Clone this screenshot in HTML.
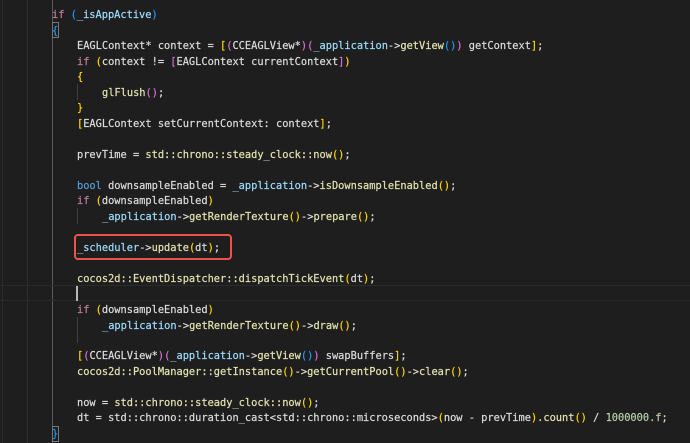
<!DOCTYPE html>
<html>
<head>
<meta charset="utf-8">
<style>
html,body{margin:0;padding:0;background:#1e1e1e}
#w{position:relative;width:690px;height:443px;overflow:hidden;background:#1e1e1e}
#t{position:absolute;left:0;top:1.6px;width:690px;height:443px}
.l{position:absolute;left:0;white-space:pre;font:10.345px/15.52px "DejaVu Sans Mono","Liberation Mono",monospace;color:#dcdcdc;filter:blur(.25px);font-variant-ligatures:none;-webkit-text-stroke:.2px currentColor}
.g{position:absolute;width:1px;background:#404040}
.h{position:absolute;left:0;width:690px;height:1px;background:#2a2a2a}
.k{color:#c586c0}.kk{color:#c27a9a}.b{color:#569cd6}.y{color:#e2e2b0}.v{color:#9cdcfe}.n{color:#b5cea8}
.o{color:#ffd700}.p{color:#da70d6}.q{color:#179fff}
</style>
</head>
<body>
<div id="w">
<div class="g" style="left:2px;top:0;height:443px;background:#2b2b2b"></div>
<div class="g" style="left:27px;top:0;height:443px;background:#2f2f2f"></div>
<div class="g" style="left:52px;top:0;height:443px;background:#5a5a5a"></div>
<div class="g" style="left:77px;top:84px;height:16px"></div>
<div class="g" style="left:77px;top:208px;height:16px"></div>
<div class="g" style="left:77px;top:317px;height:26px"></div>
<div class="h" style="top:285px"></div>
<div class="h" style="top:300px"></div>
<div style="position:absolute;left:52px;top:22px;width:5px;height:14px;border:1px solid #777"></div>
<div style="position:absolute;left:52px;top:426px;width:5px;height:14px;border:1px solid #777"></div>
<div style="position:absolute;left:76px;top:286px;width:2px;height:15px;background:#b8b8b8"></div>
<div id="t">
<div class="l" style="top:6px;left:52px"><span class="kk">if</span> <span class="q">(</span><span class="v">_isAppActive</span><span class="q">)</span></div>
<div class="l" style="top:22px;left:52px"><span class="q">{</span></div>
<div class="l" style="top:37px;left:77px">EAGLContext* context = <span class="o">[</span><span class="p">(</span>CCEAGLView*<span class="p">)</span><span class="p">(</span><span class="v">_application</span>-&gt;<span class="y">getView</span><span class="q">()</span><span class="p">)</span> getContext<span class="o">]</span>;</div>
<div class="l" style="top:53px;left:77px"><span class="kk">if</span> <span class="o">(</span>context != <span class="p">[</span>EAGLContext currentContext<span class="p">]</span><span class="o">)</span></div>
<div class="l" style="top:68px;left:77px"><span class="o">{</span></div>
<div class="l" style="top:84px;left:102px"><span class="y">glFlush</span><span class="p">()</span>;</div>
<div class="l" style="top:99px;left:77px"><span class="o">}</span></div>
<div class="l" style="top:115px;left:77px"><span class="o">[</span>EAGLContext setCurrentContext: context<span class="o">]</span>;</div>
<div class="l" style="top:146px;left:77px">prevTime = <span class="y">std::chrono::steady_clock::now</span><span class="o">()</span>;</div>
<div class="l" style="top:177px;left:77px"><span class="b">bool</span> downsampleEnabled = <span class="v">_application</span>-&gt;<span class="y">isDownsampleEnabled</span><span class="o">()</span>;</div>
<div class="l" style="top:192px;left:77px"><span class="kk">if</span> <span class="o">(</span>downsampleEnabled<span class="o">)</span></div>
<div class="l" style="top:208px;left:102px"><span class="v">_application</span>-&gt;<span class="y">getRenderTexture</span><span class="o">()</span>-&gt;<span class="y">prepare</span><span class="o">()</span>;</div>
<div class="l" style="top:239px;left:77px"><span class="v">_scheduler</span>-&gt;<span class="y">update</span><span class="o">(</span>dt<span class="o">)</span>;</div>
<div class="l" style="top:270px;left:77px"><span class="y">cocos2d::EventDispatcher::dispatchTickEvent</span><span class="o">(</span>dt<span class="o">)</span>;</div>
<div class="l" style="top:301px;left:77px"><span class="kk">if</span> <span class="o">(</span>downsampleEnabled<span class="o">)</span></div>
<div class="l" style="top:317px;left:102px"><span class="v">_application</span>-&gt;<span class="y">getRenderTexture</span><span class="o">()</span>-&gt;<span class="y">draw</span><span class="o">()</span>;</div>
<div class="l" style="top:347px;left:77px"><span class="o">[</span><span class="p">(</span>CCEAGLView*<span class="p">)</span><span class="p">(</span><span class="v">_application</span>-&gt;<span class="y">getView</span><span class="q">()</span><span class="p">)</span> swapBuffers<span class="o">]</span>;</div>
<div class="l" style="top:363px;left:77px"><span class="y">cocos2d::PoolManager::getInstance</span><span class="o">()</span>-&gt;<span class="y">getCurrentPool</span><span class="o">()</span>-&gt;<span class="y">clear</span><span class="o">()</span>;</div>
<div class="l" style="top:394px;left:77px">now = <span class="y">std::chrono::steady_clock::now</span><span class="o">()</span>;</div>
<div class="l" style="top:409px;left:77px">dt = std::chrono::duration_cast&lt;std::chrono::microseconds&gt;<span class="o">(</span>now - prevTime<span class="o">)</span>.<span class="y">count</span><span class="o">()</span> / <span class="n">1000000.f</span>;</div>
<div class="l" style="top:425px;left:52px"><span class="q">}</span></div>
</div>
<div style="position:absolute;left:74px;top:234px;width:154px;height:22px;border:2px solid #ee5248;border-radius:4px"></div>
</div>
</body>
</html>
